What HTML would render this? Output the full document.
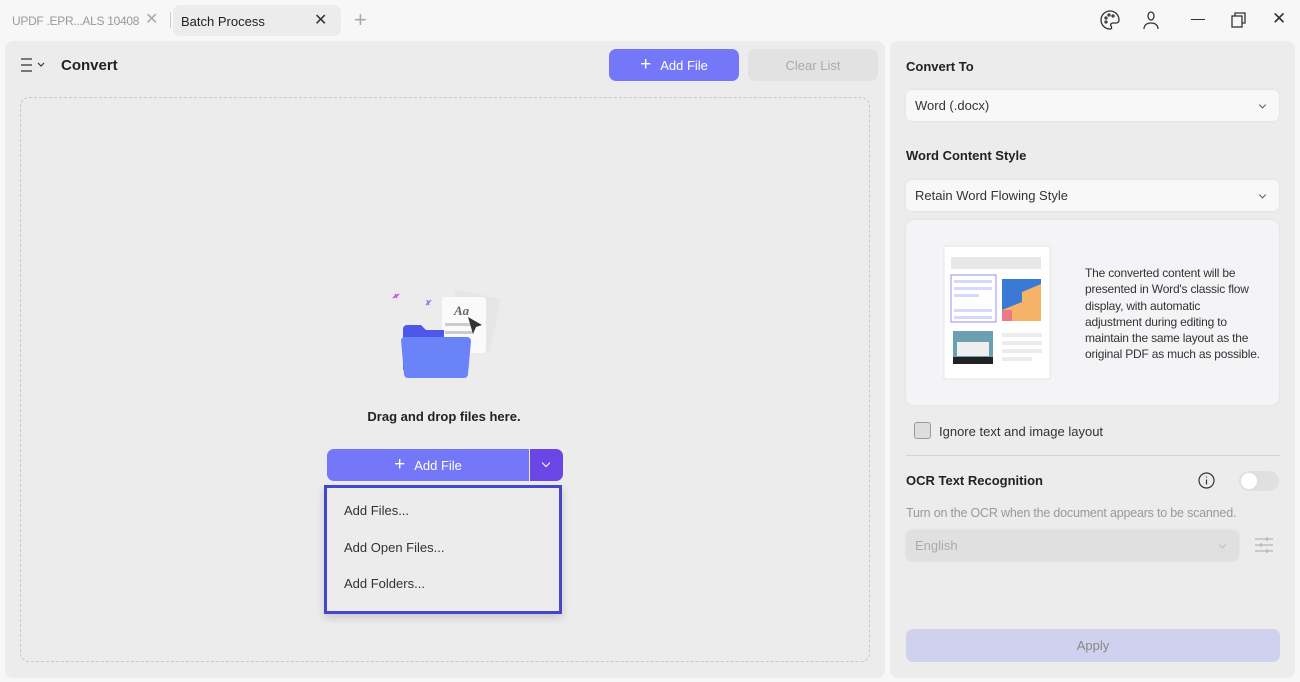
<!DOCTYPE html>
<html><head><meta charset="utf-8"><style>
*{box-sizing:border-box;margin:0;padding:0}
body{width:1300px;height:682px;background:#f7f7f7;font-family:"Liberation Sans",sans-serif;position:relative;overflow:hidden;color:#222}
.a{position:absolute}
.panel{background:#ececec;border-radius:8px}
.sel{background:#f8f8f8;border-radius:6px;font-size:13px;color:#333;padding-left:9px;display:flex;align-items:center;box-shadow:0 0 2px rgba(0,0,0,.08)}
.chev{position:absolute;right:14px;top:50%;width:5px;height:5px;border-right:1.3px solid #555;border-bottom:1.3px solid #555;transform:translateY(-70%) rotate(45deg)}
.h{font-size:13px;font-weight:bold;color:#222}
</style></head><body>
<div class="a" style="left:12px;top:14px;font-size:12px;color:#999;letter-spacing:-0.3px">UPDF .EPR...ALS 10408</div>
<div class="a" style="left:145px;top:9px;font-size:16px;color:#aaa">✕</div>
<div class="a" style="left:170px;top:12px;width:1px;height:16px;background:#ccc"></div>
<div class="a" style="left:173px;top:5px;width:168px;height:31px;background:#ececec;border-radius:7px"></div>
<div class="a" style="left:181px;top:14px;font-size:13px;color:#222">Batch Process</div>
<div class="a" style="left:314px;top:10px;font-size:16px;color:#333">✕</div>
<div class="a" style="left:354px;top:7px;font-size:22px;color:#aaa;font-weight:300">+</div>
<svg class="a" style="left:1099px;top:9px" width="22" height="22" viewBox="0 0 22 22" fill="none" stroke="#333" stroke-width="1.3"><path d="M11 2a9 9 0 1 0 0 18c2 0 2-2 1-3s0-3 2-3h3c2 0 3-1 3-3 0-5-4-9-9-9z"/><circle cx="7" cy="9" r="1"/><circle cx="10" cy="6" r="1"/><circle cx="14" cy="7" r="1"/><circle cx="7" cy="13" r="1"/></svg>
<svg class="a" style="left:1142px;top:10px" width="18" height="20" viewBox="0 0 18 20" fill="none" stroke="#333" stroke-width="1.3"><ellipse cx="9" cy="6" rx="3" ry="4"/><path d="M2 19c0-4 3-6 7-6s7 2 7 6"/></svg>
<div class="a" style="left:1191px;top:19px;width:14px;height:1.3px;background:#333"></div>
<svg class="a" style="left:1231px;top:12px" width="16" height="16" fill="none" stroke="#333" stroke-width="1.3"><rect x="1" y="4" width="10" height="11"/><path d="M4 4V1h10v10h-3"/></svg>
<div class="a" style="left:1272px;top:9px;font-size:17px;color:#333">✕</div>

<div class="a panel" style="left:5px;top:41px;width:880px;height:637px"></div>
<svg class="a" style="left:20px;top:57px" width="28" height="16" fill="none" stroke="#333" stroke-width="1.2"><path d="M1 2h11M1 8h11M1 14h11"/><path d="M18 6l3 3 3-3"/></svg>
<div class="a" style="left:61px;top:57px;font-size:15px;font-weight:bold">Convert</div>
<div class="a" style="left:609px;top:49px;width:130px;height:32px;background:#7478f8;border-radius:7px;color:#fff;font-size:13px;display:flex;align-items:center;justify-content:center"><span style="font-size:19px;margin-right:9px;font-weight:300">+</span>Add File</div>
<div class="a" style="left:748px;top:49px;width:130px;height:32px;background:#e2e2e2;border-radius:7px;color:#aaa;font-size:13px;display:flex;align-items:center;justify-content:center">Clear List</div>
<div class="a" style="left:20px;top:97px;width:850px;height:565px;border:1px dashed #c8c8c8;border-radius:9px"></div>
<svg class="a" style="left:390px;top:285px" width="115" height="100" viewBox="0 0 115 100">
<path d="M5 9l2 4M9 9l-6 4" stroke="#c34ee0" stroke-width="1.5"/>
<path d="M37 15l2 5M41 15l-5 5" stroke="#8a7cf0" stroke-width="1.5"/>
<rect x="60" y="8" width="46" height="55" rx="3" fill="#e6e6e6" transform="rotate(12 80 35)"/>
<rect x="52" y="12" width="44" height="56" rx="3" fill="#fafafa"/>
<text x="64" y="30" font-size="13" font-style="italic" font-weight="bold" fill="#666" font-family="Liberation Serif">Aa</text>
<rect x="55" y="38" width="32" height="3" fill="#ccc"/><rect x="55" y="46" width="28" height="3" fill="#ccc"/>
<path d="M78 32l14 8-6 2-3 7z" fill="#333"/>
<path d="M13 44a4 4 0 0 1 4-4h14l5 5h18v40H13z" fill="#4d57e8"/>
<path d="M11 55a4 4 0 0 1 4-3h62a4 4 0 0 1 4 4l-3 33a4 4 0 0 1-4 4H18a4 4 0 0 1-4-4z" fill="#6b83f8"/>
</svg>
<div class="a" style="left:0;width:888px;top:409px;text-align:center;font-size:13px;font-weight:bold">Drag and drop files here.</div>
<div class="a" style="left:327px;top:449px;width:202px;height:32px;background:#7478f8;border-radius:7px 0 0 7px;color:#fff;font-size:13px;display:flex;align-items:center;justify-content:center"><span style="font-size:19px;margin-right:9px;font-weight:300">+</span>Add File</div>
<div class="a" style="left:530px;top:449px;width:33px;height:32px;background:#6a46e6;border-radius:0 7px 7px 0"><div style="position:absolute;left:13px;top:11px;width:6px;height:6px;border-right:1.5px solid #fff;border-bottom:1.5px solid #fff;transform:rotate(45deg)"></div></div>
<div class="a" style="left:324px;top:485px;width:238px;height:129px;border:3px solid #4347c8;background:#ececec;box-shadow:0 4px 8px rgba(0,0,0,.15)"></div>
<div class="a" style="left:344px;top:503px;font-size:13px;color:#333">Add Files...</div>
<div class="a" style="left:344px;top:540px;font-size:13px;color:#333">Add Open Files...</div>
<div class="a" style="left:344px;top:576px;font-size:13px;color:#333">Add Folders...</div>

<div class="a panel" style="left:890px;top:41px;width:405px;height:637px"></div>
<div class="a h" style="left:906px;top:59px">Convert To</div>
<div class="a sel" style="left:906px;top:90px;width:373px;height:31px">Word (.docx)<i class="chev"></i></div>
<div class="a h" style="left:906px;top:148px">Word Content Style</div>
<div class="a sel" style="left:906px;top:180px;width:373px;height:31px">Retain Word Flowing Style<i class="chev"></i></div>
<div class="a" style="left:906px;top:220px;width:373px;height:185px;background:#f4f4f6;border-radius:8px;box-shadow:0 0 2px rgba(0,0,0,.08)"></div>
<svg class="a" style="left:943px;top:245px" width="108" height="135" viewBox="0 0 108 135">
<rect x="1" y="1" width="106" height="133" fill="#fff" stroke="#e4e4e4"/>
<rect x="8" y="12" width="90" height="12" fill="#e8e8e8"/>
<rect x="8" y="30" width="45" height="47" fill="none" stroke="#9b8cf0"/>
<rect x="11" y="35" width="38" height="3" fill="#d8d8f8"/><rect x="11" y="42" width="38" height="3" fill="#d8d8f8"/><rect x="11" y="49" width="25" height="3" fill="#d8d8f8"/><rect x="11" y="64" width="38" height="3" fill="#d8d8f8"/><rect x="11" y="71" width="38" height="3" fill="#d8d8f8"/>
<rect x="59" y="34" width="39" height="42" fill="#3a79d4"/><path d="M59 65l20-8v-10l19-8v37H59z" fill="#f5b36a"/><path d="M59 65h10v11H59z" fill="#e78"/>
<rect x="10" y="86" width="40" height="33" fill="#6aa0b0"/><rect x="14" y="97" width="32" height="14" fill="#eee"/><rect x="10" y="112" width="40" height="7" fill="#222"/>
<rect x="59" y="88" width="40" height="4" fill="#ececec"/><rect x="59" y="96" width="40" height="4" fill="#ececec"/><rect x="59" y="104" width="40" height="4" fill="#ececec"/><rect x="59" y="112" width="30" height="4" fill="#ececec"/>
</svg>
<div class="a" style="left:1085px;top:265px;white-space:nowrap;font-size:12px;line-height:16.3px;color:#333;letter-spacing:-0.2px">The converted content will be<br>presented in Word's classic flow<br>display, with automatic<br>adjustment during editing to<br>maintain the same layout as the<br>original PDF as much as possible.</div>
<div class="a" style="left:914px;top:422px;width:17px;height:17px;border:1px solid #999;border-radius:3px;background:#ddd"></div>
<div class="a" style="left:939px;top:424px;font-size:13px;color:#333">Ignore text and image layout</div>
<div class="a" style="left:906px;top:455px;width:374px;height:1px;background:#d4d4d4"></div>
<div class="a h" style="left:906px;top:473px">OCR Text Recognition</div>
<svg class="a" style="left:1198px;top:472px" width="17" height="17" fill="none" stroke="#333" stroke-width="1.2"><circle cx="8.5" cy="8.5" r="7.5"/><path d="M8.5 7.5v5M8.5 4.5v1"/></svg>
<div class="a" style="left:1239px;top:471px;width:40px;height:20px;border-radius:10px;background:#e0e0e0"><div style="position:absolute;left:2px;top:2px;width:16px;height:16px;border-radius:50%;background:#fff"></div></div>
<div class="a" style="left:906px;top:506px;font-size:12.5px;color:#999;letter-spacing:-0.2px">Turn on the OCR when the document appears to be scanned.</div>
<div class="a sel" style="left:906px;top:530px;width:333px;height:31px;background:#e0e0e0;color:#aaa">English<i class="chev" style="border-color:#bbb"></i></div>
<svg class="a" style="left:1255px;top:536px" width="18" height="18" fill="none" stroke="#aaa" stroke-width="1.1"><path d="M0 3h18M0 9h18M0 15h18"/><path d="M12 1v4M6 7v4M12 13v4"/></svg>
<div class="a" style="left:906px;top:629px;width:374px;height:33px;background:#d0d1ee;border-radius:7px;color:#888;font-size:13px;display:flex;align-items:center;justify-content:center">Apply</div>
</body></html>
